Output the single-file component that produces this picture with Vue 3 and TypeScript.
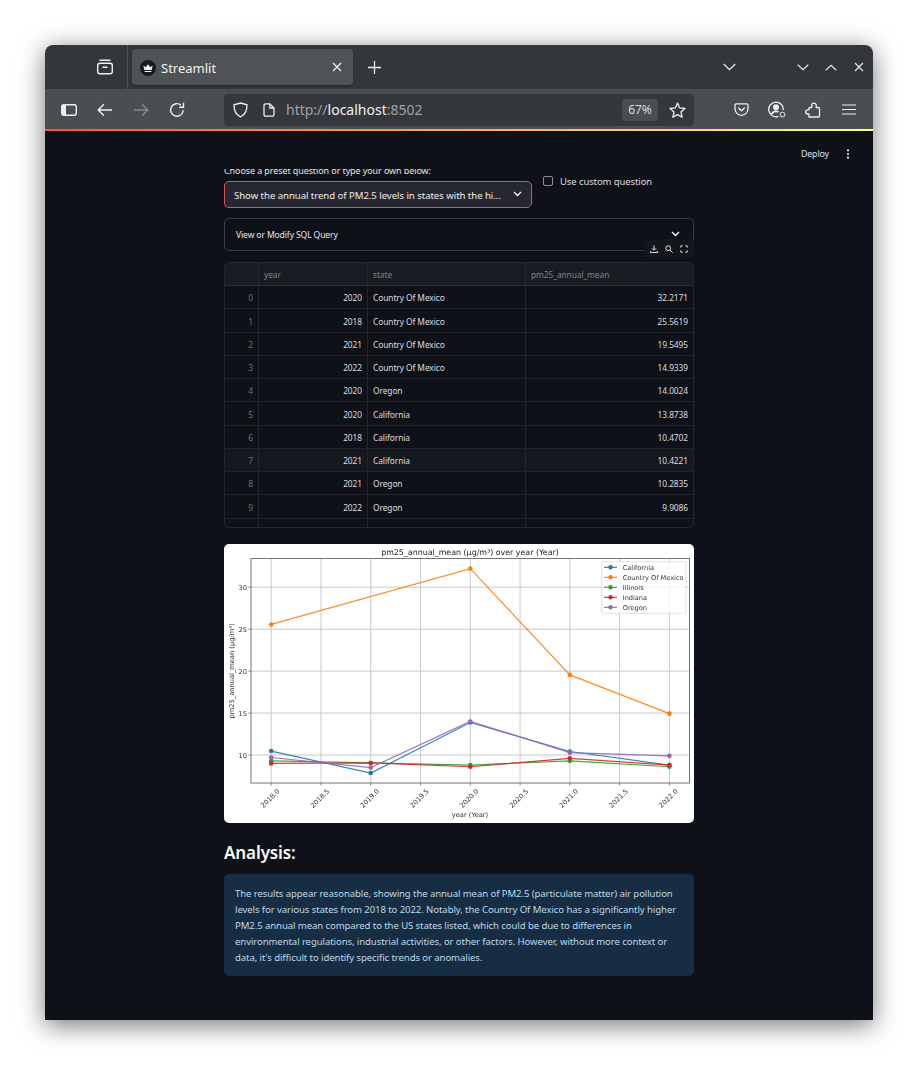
<script setup lang="ts">
const rows: [number, number, string, string][] = [
  [0, 2020, 'Country Of Mexico', '32.2171'],
  [1, 2018, 'Country Of Mexico', '25.5619'],
  [2, 2021, 'Country Of Mexico', '19.5495'],
  [3, 2022, 'Country Of Mexico', '14.9339'],
  [4, 2020, 'Oregon', '14.0024'],
  [5, 2020, 'California', '13.8738'],
  [6, 2018, 'California', '10.4702'],
  [7, 2021, 'California', '10.4221'],
  [8, 2021, 'Oregon', '10.2835'],
  [9, 2022, 'Oregon', '9.9086'],
]
const X = (yr: number) => 47.2 + (yr - 2018) * 99.55
const Y = (v: number) => 211 - (v - 10) * 8.39
type P = [number, number]
const series: { name: string; color: string; pts: P[] }[] = [
  { name: 'California', color: '#1f77b4', pts: [[2018, 10.47], [2019, 7.85], [2020, 13.87], [2021, 10.42], [2022, 8.8]] },
  { name: 'Country Of Mexico', color: '#ff7f0e', pts: [[2018, 25.56], [2020, 32.22], [2021, 19.55], [2022, 14.93]] },
  { name: 'Illinois', color: '#2ca02c', pts: [[2018, 9.3], [2019, 9.05], [2020, 8.8], [2021, 9.3], [2022, 8.6]] },
  { name: 'Indiana', color: '#d62728', pts: [[2018, 9.0], [2019, 9.05], [2020, 8.6], [2021, 9.6], [2022, 8.8]] },
  { name: 'Oregon', color: '#9467bd', pts: [[2018, 9.7], [2019, 8.5], [2020, 14.0], [2021, 10.28], [2022, 9.9]] },
]
const plotted = series.map((s, i) => ({
  ...s,
  line: s.pts.map(([a, b]) => `${X(a)},${Y(b)}`).join(' '),
  dots: s.pts.map(([a, b]) => ({ x: X(a), y: Y(b) })),
  ly: 23.3 + i * 10,
}))
const xTicks = [0, 1, 2, 3, 4, 5, 6, 7, 8].map((i) => {
  const yr = 2018 + i * 0.5
  return { x: X(yr), label: yr.toFixed(1) }
})
const yTicks = [10, 15, 20, 25, 30].map((v) => ({ y: Y(v), label: String(v) }))
const lines = [
  'The results appear reasonable, showing the annual mean of PM2.5 (particulate matter) air pollution',
  'levels for various states from 2018 to 2022. Notably, the Country Of Mexico has a significantly higher',
  'PM2.5 annual mean compared to the US states listed, which could be due to differences in',
  'environmental regulations, industrial activities, or other factors. However, without more context or',
  "data, it's difficult to identify specific trends or anomalies.",
]
</script>

<template>
  <div class="window">
    <div class="titlebar">
      <div class="tabs-left">
        <svg width="18" height="18" viewBox="0 0 18 18" fill="none" stroke="#f0f0f0" stroke-width="1.4">
          <path d="M4 2.2h10" stroke-linecap="round" />
          <rect x="1.7" y="5.2" width="14.6" height="10.6" rx="2.2" />
          <path d="M7 9.2h4" stroke-linecap="round" />
        </svg>
      </div>
      <div class="tab">
        <svg width="16" height="16" viewBox="0 0 16 16">
          <circle cx="8" cy="8" r="8" fill="#1a1c22" />
          <path d="M3.4 5.4l2.4 1.9L8 4.300l2.200 3 2.400-1.900-1 4.600H4.400z" fill="#f4f4f4" />
          <path d="M4.600 10.900h6.800v1H4.600z" fill="#f4f4f4" />
        </svg>
        <span class="tab-title">Streamlit</span>
        <svg class="tab-close" width="10" height="10" viewBox="0 0 10 10" stroke="#eee" stroke-width="1.3"><path d="M1 1l8 8M9 1l-8 8" /></svg>
      </div>
      <div class="plus">
        <svg width="13" height="13" viewBox="0 0 13 13" stroke="#f0f0f0" stroke-width="1.3"><path d="M6.5 0v13M0 6.5h13" /></svg>
      </div>
      <div class="spacer"></div>
      <svg class="tabs-menu" width="13" height="8" viewBox="0 0 13 8" fill="none" stroke="#e8e8e8" stroke-width="1.3"><path d="M.7 1l5.8 5.6L12.3 1" /></svg>
      <div class="winbtns">
        <svg width="12" height="7" viewBox="0 0 12 7" fill="none" stroke="#e8e8e8" stroke-width="1.2"><path d="M.7.8L6 5.8 11.3.8" /></svg>
        <svg width="12" height="7" viewBox="0 0 12 7" fill="none" stroke="#e8e8e8" stroke-width="1.2"><path d="M.7 6.2L6 1.2l5.300 5" /></svg>
        <svg class="win-x" width="10" height="10" viewBox="0 0 10 10" fill="none" stroke="#e8e8e8" stroke-width="1.2"><path d="M1 1l8 8M9 1l-8 8" /></svg>
      </div>
    </div>

    <div class="toolbar">
      <div class="btn">
        <svg width="16" height="12" viewBox="0 0 16 12" fill="none"><rect x=".7" y=".7" width="14.600" height="10.600" rx="2" stroke="#f0f0f0" stroke-width="1.400" /><path d="M1 2.500a1.500 1.500 0 0 1 1.500-1.500H5v10H2.500A1.500 1.500 0 0 1 1 9.500z" fill="#f0f0f0" /></svg>
      </div>
      <div class="btn">
        <svg width="16" height="14" viewBox="0 0 16 14" fill="none" stroke="#f0f0f0" stroke-width="1.400"><path d="M15 7H1.500M7 1.200L1.200 7 7 12.800" /></svg>
      </div>
      <div class="btn">
        <svg width="16" height="14" viewBox="0 0 16 14" fill="none" stroke="#85888c" stroke-width="1.400"><path d="M1 7h13.500M9 1.200L14.800 7 9 12.800" /></svg>
      </div>
      <div class="btn">
        <svg width="16" height="16" viewBox="0 0 16 16" fill="none" stroke="#f0f0f0" stroke-width="1.400"><path d="M14.200 8.200A6.300 6.300 0 1 1 12 3.200" /><path d="M14.500 .8v4.400h-4.400" /></svg>
      </div>
      <div class="urlbar">
        <svg class="shield" width="15" height="16" viewBox="0 0 15 16" fill="none" stroke="#f0f0f0" stroke-width="1.300"><path d="M7.500 1L14 2.800c.1 5.500-1.800 9.800-6.500 12.200C2.800 12.600.9 8.300 1 2.800z" /></svg>
        <svg class="page" width="12" height="14" viewBox="0 0 12 14" fill="none" stroke="#f0f0f0" stroke-width="1.300"><path d="M1 2.300A1.500 1.500 0 0 1 2.500.8h4.300L11 5v6.700a1.500 1.500 0 0 1-1.500 1.500h-7A1.500 1.500 0 0 1 1 11.700z" /><path d="M6.800 1v4H11" /></svg>
        <span class="url"><span class="dim">http://</span>localhost<span class="dim">:8502</span></span>
        <div class="spacer"></div>
        <span class="zoomlevel">67%</span>
        <svg class="star" width="17" height="16" viewBox="0 0 17 16" fill="none" stroke="#f0f0f0" stroke-width="1.300" stroke-linejoin="round"><path d="M8.500 1l2.200 4.900 5.300.6-4 3.600 1.100 5.200-4.600-2.700-4.600 2.700L5 10.100l-4-3.600 5.300-.6z" /></svg>
      </div>
      <div class="right-btns">
        <div class="btn">
          <svg width="15" height="14" viewBox="0 0 15 14" fill="none" stroke="#f0f0f0" stroke-width="1.300"><path d="M1 2.200A1.300 1.300 0 0 1 2.300.9h10.400A1.300 1.300 0 0 1 14 2.200v3.600a6.500 6.500 0 0 1-13 0z" /><path d="M4.600 5l2.900 2.800L10.400 5" stroke-linecap="round" /></svg>
        </div>
        <div class="btn">
          <svg width="18" height="17" viewBox="0 0 18 17" fill="none" stroke="#f0f0f0" stroke-width="1.300"><path d="M10.500 15.300A7.300 7.300 0 1 1 15.300 9" /><circle cx="8" cy="6.300" r="2.300" fill="#f0f0f0" /><path d="M3.800 13c.8-2 2.200-2.700 4.200-2.700 1 0 1.800.2 2.500.6" stroke-width="1.800" /><circle cx="14.500" cy="13.500" r="2.300" stroke="#c9cacc" stroke-width="1.100" /></svg>
        </div>
        <div class="btn">
          <svg width="16" height="16" viewBox="0 0 16 16" fill="none" stroke="#f0f0f0" stroke-width="1.300" stroke-linejoin="round"><path d="M4 15H13.500a1 1 0 0 0 1-1V6.500a1 1 0 0 0-1-1H11.200V3.300a2.200 2.200 0 0 0-4.400 0V5.500H5a1 1 0 0 0-1 1V7.800H2.800a2.100 2.100 0 0 0 0 4.200H4z" /></svg>
        </div>
        <div class="btn">
          <svg width="14" height="11" viewBox="0 0 14 11" stroke="#f0f0f0" stroke-width="1.200"><path d="M0 1h14M0 5.500h14M0 10h14" /></svg>
        </div>
      </div>
    </div>
    <div class="decoration"></div>

    <main class="app">
      <header class="app-header">
        <span class="deploy">Deploy</span>
        <svg class="kebab" width="4" height="10" viewBox="0 0 4 10" fill="#e8e8e8"><circle cx="2" cy="1.300" r="1.100" /><circle cx="2" cy="5" r="1.100" /><circle cx="2" cy="8.700" r="1.100" /></svg>
      </header>
      <section class="content">
        <div class="cut-label"><span>Choose a preset question or type your own below:</span></div>
        <div class="question-row">
          <div class="select">
            <span class="select-text">Show the annual trend of PM2.5 levels in states with the hi…</span>
            <svg width="9" height="6" viewBox="0 0 9 6" fill="none" stroke="#fafafa" stroke-width="1.300"><path d="M1 1l3.500 3.500L8 1" /></svg>
          </div>
          <label class="check"><span class="box"></span><span>Use custom question</span></label>
        </div>
        <div class="expander">
          <span>View or Modify SQL Query</span>
          <svg width="9" height="6" viewBox="0 0 9 6" fill="none" stroke="#fafafa" stroke-width="1.300"><path d="M1 1l3.500 3.500L8 1" /></svg>
        </div>
        <div class="table-wrap">
          <div class="table-tools">
            <svg width="8" height="8" viewBox="0 0 8 8" fill="none" stroke="#e0e0e0" stroke-width="1"><path d="M4 .5v4.500M2 3.300L4 5.300l2-2M.5 6v1.500h7V6" /></svg>
            <svg width="8" height="8" viewBox="0 0 8 8" fill="none" stroke="#e0e0e0" stroke-width="1"><circle cx="3.200" cy="3.200" r="2.400" /><path d="M5 5l2.600 2.600" /></svg>
            <svg width="8" height="8" viewBox="0 0 8 8" fill="none" stroke="#e0e0e0" stroke-width="1"><path d="M.8 2.600V.8h1.800M5.400.8h1.800v1.800M7.200 5.400v1.800H5.400M2.600 7.200H.8V5.400" /></svg>
          </div>
          <div class="table">
            <div class="trow thead">
              <div class="cell"></div>
              <div class="cell">year</div>
              <div class="cell">state</div>
              <div class="cell">pm25_annual_mean</div>
            </div>
            <div v-for="r in rows" :key="r[0]" class="trow body-row" :class="{ hot: r[0] === 7 }">
              <div class="cell idx">{{ r[0] }}</div>
              <div class="cell num">{{ r[1] }}</div>
              <div class="cell">{{ r[2] }}</div>
              <div class="cell num">{{ r[3] }}</div>
            </div>
            <div class="trow tail">
              <div class="cell"></div>
              <div class="cell"></div>
              <div class="cell"></div>
              <div class="cell"></div>
            </div>
          </div>
        </div>

        <div class="chart">
          <svg width="470" height="279" viewBox="0 0 470 279" class="chart-svg">
            <g stroke="#b0b0b0" stroke-width="1" opacity=".68">
              <line v-for="t in xTicks" :key="t.label" :x1="t.x" :x2="t.x" y1="14.500" y2="239" />
              <line v-for="t in yTicks" :key="t.label" x1="27" x2="465.500" :y1="t.y" :y2="t.y" />
            </g>
            <g stroke="#333" stroke-width=".6">
              <line v-for="t in xTicks" :key="t.label" :x1="t.x" :x2="t.x" y1="239" y2="241.500" />
              <line v-for="t in yTicks" :key="t.label" x1="24.500" x2="27" :y1="t.y" :y2="t.y" />
            </g>
            <g v-for="s in plotted" :key="s.name">
              <polyline :points="s.line" fill="none" :stroke="s.color" stroke-width="1.200" opacity=".9" />
              <circle v-for="(d, i) in s.dots" :key="i" :cx="d.x" :cy="d.y" r="2.300" :fill="s.color" />
            </g>
            <rect x="27" y="14.500" width="438.500" height="224.500" fill="none" stroke="#666" stroke-width=".9" />
            <g class="tick-text">
              <text v-for="t in yTicks" :key="t.label" x="23" :y="t.y + 2.500" text-anchor="end">{{ t.label }}</text>
              <text v-for="t in xTicks" :key="t.label" text-anchor="middle" :transform="`translate(${t.x + 0.5} 256) rotate(-45)`">{{ t.label }}</text>
              <text x="246" y="272.500" text-anchor="middle">year (Year)</text>
              <text text-anchor="middle" transform="translate(10 127) rotate(-90)">pm25_annual_mean (µg/m³)</text>
            </g>
            <text class="chart-title" x="246" y="10.800" text-anchor="middle">pm25_annual_mean (µg/m³) over year (Year)</text>
            <rect x="377.700" y="17.700" width="84.300" height="51.600" rx="1.500" fill="#fff" fill-opacity=".8" stroke="#ccc" stroke-width=".6" />
            <g v-for="s in plotted" :key="s.name + 'l'">
              <line x1="380" x2="393" :y1="s.ly" :y2="s.ly" :stroke="s.color" stroke-width="1.100" />
              <circle cx="386.500" :cy="s.ly" r="2.200" :fill="s.color" />
              <text class="legend-text" x="398.700" :y="s.ly + 2.300">{{ s.name }}</text>
            </g>
          </svg>
        </div>

        <h3 class="analysis">Analysis:</h3>
        <div class="info">
          <template v-for="(l, i) in lines" :key="i">{{ l }}<br /></template>
        </div>
      </section>
    </main>
  </div>
</template>

<style>
html, body { margin: 0; background: #fff; }
</style>

<style scoped>
.window {
  width: 828px;
  height: 975px;
  margin: 45px 0 45px 45px;
  border-radius: 8px 8px 0 0;
  overflow: hidden;
  display: flex;
  flex-direction: column;
  box-shadow: 0 5px 26px rgba(0, 0, 0, 0.55);
  font-family: "Noto Sans", sans-serif;
  position: relative;
}
.titlebar {
  height: 44px;
  background: #33373b;
  display: flex;
  align-items: center;
  flex: none;
}
.tabs-left {
  width: 82px;
  height: 44px;
  border-right: 1px solid #50545a;
  display: flex;
  align-items: center;
  justify-content: flex-end;
}
.tabs-left svg { margin-right: 13px; margin-top: -1px; }
.tab {
  margin-left: 4px;
  width: 221px;
  height: 36px;
  box-sizing: border-box;
  background: #4f5257;
  border-radius: 4px;
  display: flex;
  align-items: center;
  padding: 0 11px 0 8px;
  box-shadow: 0 1px 2px rgba(0, 0, 0, 0.3);
}
.tab > svg:first-child { margin-top: 1px; }
.tab-title { margin-left: 5px; margin-top: 1px; font-size: 13px; color: #f2f2f2; flex: 1; }
.plus { width: 43px; display: flex; justify-content: center; }
.spacer { flex: 1; }
.tabs-menu { margin-right: 61.500px; }
.winbtns {
  display: flex;
  align-items: center;
  gap: 16px;
  margin-right: 9px;
}
.win-x { margin-left: 1px; }
.toolbar {
  height: 41px;
  background: #4a4d51;
  display: flex;
  align-items: center;
  padding-left: 6px;
  flex: none;
}
.btn { width: 36px; height: 32px; display: flex; align-items: center; justify-content: center; flex: none; }
.urlbar {
  margin-left: 29px;
  width: 470px;
  height: 32px;
  border-radius: 4px;
  background: #34373b;
  display: flex;
  align-items: center;
  box-sizing: border-box;
  padding: 0 8px 0 9px;
  flex: none;
}
.page { margin-left: 15px; }
.url { margin-left: 11px; font-size: 14px; color: #f2f2f2; }
.dim { color: #a2a4a6; }
.zoomlevel {
  width: 36px;
  height: 22px;
  background: #4a4d51;
  border-radius: 3px;
  font-size: 12px;
  color: #dcdcdc;
  display: flex;
  align-items: center;
  justify-content: center;
  margin-right: 11px;
}
.right-btns { display: flex; margin-left: 29px; }
.decoration {
  height: 2px;
  flex: none;
  margin-top: -1px;
  background: linear-gradient(90deg, #ff4b4b, #fffd80);
}
.app {
  flex: 1;
  background: #0e1117;
  overflow: hidden;
  font-family: "Noto Sans", sans-serif;
  color: #fafafa;
}
.app-header {
  height: 38px;
  display: flex;
  align-items: center;
  justify-content: flex-end;
  padding: 8px 23px 0 0;
  box-sizing: border-box;
}
.deploy { font-size: 8.800px; letter-spacing: -0.1px; color: #dfe4ea; margin-right: 17px; }
.content { margin-left: 179px; width: 470px; }
.cut-label {
  height: 7px;
  display: flex;
  align-items: flex-end;
  overflow: hidden;
  font-size: 9px;
  letter-spacing: -0.1px;
  line-height: 10px;
  color: #e4e4e6;
}
.question-row { display: flex; margin-top: 5px; }
.select {
  width: 308px;
  height: 27px;
  box-sizing: border-box;
  border: 1px solid #e0525a;
  border-radius: 5px;
  background: #262730;
  display: flex;
  align-items: center;
  justify-content: space-between;
  padding: 0 9px;
  font-size: 9.600px;
  letter-spacing: -0.05px;
  color: #ececee;
}
.select-text { white-space: nowrap; margin-top: 2px; }
.select svg { margin-top: -2px; }
.check {
  margin-left: 11px;
  display: flex;
  align-items: center;
  gap: 7px;
  height: 10px;
  align-self: flex-start;
  margin-top: -5px;
  font-size: 9.500px;
  letter-spacing: -0.1px;
  color: #dcdde0;
}
.box {
  width: 10px;
  height: 10px;
  box-sizing: border-box;
  border: 1px solid #8b8d93;
  border-radius: 2px;
  background: #0e1117;
}
.expander {
  margin-top: 10px;
  height: 33px;
  box-sizing: border-box;
  border: 1px solid #3a3d45;
  border-radius: 5px;
  display: flex;
  align-items: center;
  justify-content: space-between;
  padding: 0 13px 0 11px;
  font-size: 8.600px;
  letter-spacing: -0.14px;
  color: #e6e6e8;
}
.expander svg { margin-top: -2px; }
.table-wrap { position: relative; margin-top: 11px; }
.table-tools {
  position: absolute;
  right: 0;
  top: -23px;
  width: 50px;
  height: 19px;
  box-sizing: border-box;
  padding: 0 6px;
  background: #13161d;
  border-radius: 4px;
  display: flex;
  align-items: center;
  justify-content: space-between;
  z-index: 1;
}
.table {
  height: 266px;
  box-sizing: border-box;
  border: 1px solid #24272e;
  border-radius: 5px;
  overflow: hidden;
  font-size: 8.400px;
  letter-spacing: -0.08px;
}
.trow {
  display: grid;
  grid-template-columns: 34px 109px 158px 1fr;
  height: 23.250px;
  box-sizing: border-box;
  border-bottom: 1px solid #20232a;
}
.trow.thead { height: 23px; background: #1a1c24; border-bottom-color: #2b2e35; }
.trow.hot { background: #15181f; }
.trow.tail { border-bottom: 0; height: 21px; }
.cell {
  border-right: 1px solid #24272e;
  display: flex;
  align-items: center;
  padding: 0 5px;
  box-sizing: border-box;
  color: #dcdde0;
  white-space: nowrap;
}
.body-row .cell { padding-top: 1.500px; }
.thead .cell { color: #7f8288; }
.cell:last-child { border-right: 0; }
.cell.num { justify-content: flex-end; }
.cell.idx { justify-content: flex-end; color: #6f7278; padding-right: 5px; }
.chart {
  margin-top: 16px;
  height: 279px;
  background: #fff;
  border-radius: 5px;
  overflow: hidden;
}
.chart-svg { display: block; filter: blur(0.25px); }
.tick-text text {
  font-family: "DejaVu Sans", sans-serif;
  font-size: 6.700px;
  fill: #333;
}
.chart-title {
  font-family: "DejaVu Sans", sans-serif;
  font-size: 7.900px;
  fill: #222;
}
.legend-text {
  font-family: "DejaVu Sans", sans-serif;
  font-size: 6.600px;
  fill: #333;
}
.analysis {
  margin: 19px 0 0;
  height: 32px;
  line-height: 21px;
  font-size: 17px;
  font-weight: 600;
  letter-spacing: -0.1px;
  color: #fafafa;
}
.info {
  box-sizing: border-box;
  height: 102px;
  background: #172d43;
  border-radius: 5px;
  padding: 12px 11px 10px;
  font-size: 9.600px;
  letter-spacing: -0.1px;
  line-height: 16px;
  color: #bcd9ec;
  white-space: nowrap;
}
</style>
